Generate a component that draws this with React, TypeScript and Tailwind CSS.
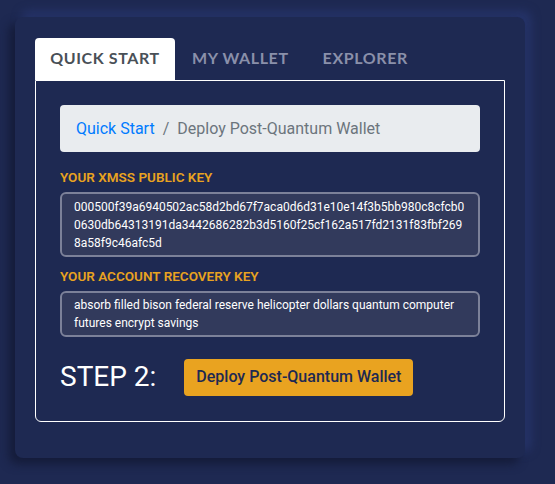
import React, { type FC } from "react";

const PUBLIC_KEY_LINES = [
  "000500f39a6940502ac58d2bd67f7aca0d6d31e10e14f3b5bb980c8cfcb0",
  "0630db64313191da3442686282b3d5160f25cf162a517fd2131f83fbf269",
  "8a58f9c46afc5d",
];

const RECOVERY_KEY =
  "absorb filled bison federal reserve helicopter dollars quantum computer futures encrypt savings";

const tabs = ["Quick Start", "My Wallet", "Explorer"];

const App: FC = () => (
  <div className="w-[555px] h-[484px] bg-[#1e2952] pt-[17px] pl-[15px] font-['Roboto',sans-serif] overflow-hidden">
    <div className="w-[510px] h-[441px] rounded-lg bg-[#1e2952] pt-[21px] pl-[20px] shadow-[-6px_6px_10px_#151c3a,6px_-6px_10px_#26346a]">
      <div className="flex h-[42px] font-['Lato',sans-serif] font-bold text-[16px] uppercase tracking-[0.6px]">
        {tabs.map((tab, i) => (
          <div
            key={tab}
            className={
              i === 0
                ? "w-[140px] flex items-center justify-center pb-[3px] bg-white text-[#495057] rounded-t-[4px] relative z-10"
                : "px-[17px] flex items-center pb-[3px] text-[#8a90aa]"
            }
          >
            {tab}
          </div>
        ))}
      </div>

      <div className="w-[470px] h-[342px] border border-white rounded-b-md px-6 pt-6">
        <div className="h-[47px] rounded bg-[#e9ecef] flex items-center pl-4 text-[16px]">
          <span className="text-[#007bff]">Quick Start</span>
          <span className="text-[#6c757d] px-2">/</span>
          <span className="text-[#6c757d]">Deploy Post-Quantum Wallet</span>
        </div>

        <div className="mt-[17px] text-[13.5px] font-semibold text-[#e9a320] leading-4">YOUR XMSS PUBLIC KEY</div>
        <div className="mt-[7px] h-[65px] border-2 border-[#7c8199] rounded-md bg-[#323a5c] pl-3 pr-2 pt-[4px] text-white text-[12px] leading-[18px] whitespace-nowrap">
          {PUBLIC_KEY_LINES.map((line) => (
            <div key={line}>{line}</div>
          ))}
        </div>

        <div className="mt-[11px] text-[13.5px] font-semibold text-[#e9a320] leading-4">YOUR ACCOUNT RECOVERY KEY</div>
        <div className="mt-[7px] h-[46px] border-2 border-[#7c8199] rounded-md bg-[#323a5c] pl-3 pr-2 pt-[3px] text-white text-[12px] leading-[18px]">
          {RECOVERY_KEY}
        </div>

        <div className="mt-[19px] flex items-center">
          <span className="text-white text-[28px] font-normal">STEP 2:</span>
          <button className="ml-[28px] h-[37px] w-[229px] rounded bg-[#e9a320] text-[#1e2952] text-[16px] font-medium">
            Deploy Post-Quantum Wallet
          </button>
        </div>
      </div>
    </div>
  </div>
);

export default App;
